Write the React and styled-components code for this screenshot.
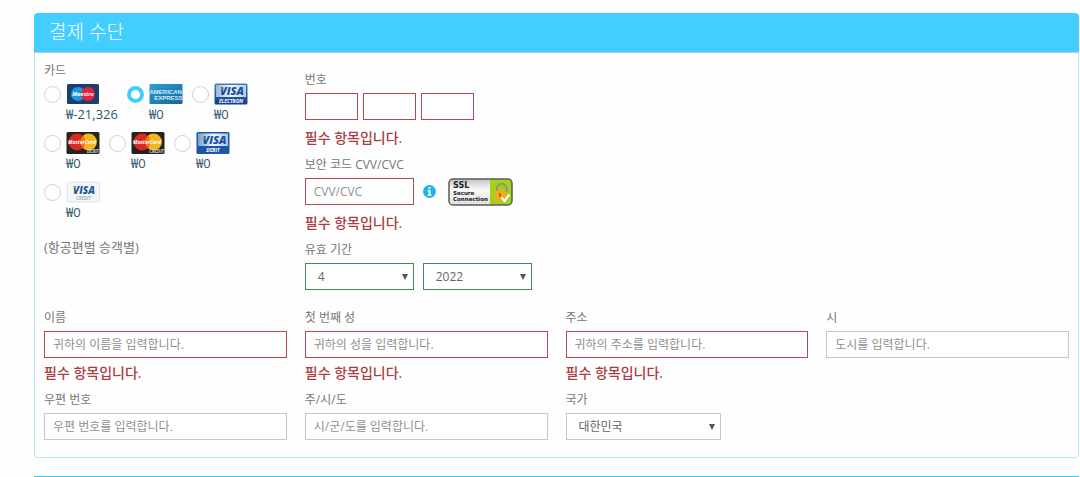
import React, { useState } from 'react';
import styled, { createGlobalStyle } from 'styled-components';

const CARDS = [
  { id: 'maestro', name: 'Maestro', price: '₩-21,326', Logo: MaestroLogo },
  { id: 'amex', name: 'American Express', price: '₩0', Logo: AmexLogo },
  { id: 'electron', name: 'Visa Electron', price: '₩0', Logo: VisaElectronLogo },
  { id: 'mc-debit', name: 'MasterCard Debit', price: '₩0', Logo: MasterDebitLogo },
  { id: 'mc-credit', name: 'MasterCard Credit', price: '₩0', Logo: MasterCreditLogo },
  { id: 'visa-debit', name: 'Visa Debit', price: '₩0', Logo: VisaDebitLogo },
  { id: 'visa-credit', name: 'Visa Credit', price: '₩0', Logo: VisaCreditLogo },
];

const REQUIRED = '필수 항목입니다.';

const BORDERS = {
  error: '#b5494c',
  valid: '#4a8551',
  normal: '#c8c8c8',
};

const GlobalStyle = createGlobalStyle`
  * {
    box-sizing: border-box;
  }

  body {
    margin: 0;
    background: #fefefe;
    color: #777;
    font-family: 'Open Sans', 'Noto Sans CJK KR', sans-serif;
    font-size: 12px;
    line-height: 18px;
  }

  input, select, button {
    font: inherit;
  }
`;

const Page = styled.main`
  display: flex;
  flex-direction: column;
  gap: 18px;
  padding: 13px 1px 0 34px;
`;

const Panel = styled.section`
  border-radius: 4px;
  overflow: hidden;
`;

const PanelHeader = styled.h2`
  margin: 0;
  padding: 6px 15px 7px;
  background: #42ceff;
  border-bottom: 1px solid #b4cdea;
  color: #fff;
  font-size: 19px;
  font-weight: 300;
  line-height: 26px;
`;

const PanelBody = styled.div`
  padding: 9px 9px 17px;
  border: 1px solid #b9e5f3;
  border-top: none;
  border-radius: 0 0 4px 4px;
`;

const NextPanel = styled.div`
  flex: none;
  height: 1px;
  background: #42ceff;
`;

const Columns = styled.div`
  display: grid;
  grid-template-columns: repeat(4, minmax(0, 1fr));
  gap: 9px 18px;
  margin-top: ${(props) => props.$top || 0}px;
`;

const CardGroup = styled.fieldset`
  min-width: 0;
  margin: 0;
  padding: 0;
  border: none;
`;

const Legend = styled.legend`
  display: block;
  margin-bottom: 3px;
  padding: 0;
`;

const CardList = styled.div`
  display: flex;
  flex-wrap: wrap;
  gap: 9px;
`;

const CardOption = styled.label`
  display: flex;
  gap: 5px;
  cursor: pointer;
`;

const Radio = styled.input`
  appearance: none;
  flex: none;
  width: 17px;
  height: 17px;
  margin: 3px 0 0;
  border: 1px solid #cfcfd6;
  border-radius: 50%;
  background: #fff;

  &:checked {
    border: 4px solid #42ceff;
  }
`;

const CardInfo = styled.span`
  display: flex;
  flex-direction: column;
  color: #2b566c;
  font-size: 13px;
`;

const CardArt = styled.svg`
  display: block;
  width: 34px;
  height: 22px;
`;

const Note = styled.p`
  margin: 17px 0 0;
  font-size: 13px;
`;

const Details = styled.div`
  display: flex;
  flex-direction: column;
  gap: 9px;
  padding-top: 9px;
`;

const FieldBox = styled.div`
  display: flex;
  flex-direction: column;
  align-items: stretch;
`;

const Label = styled.label`
  margin-bottom: 4px;
`;

const Inline = styled.div`
  display: flex;
  align-items: center;
  height: 27px;
  gap: ${(props) => props.$gap}px;
`;

const Input = styled.input`
  width: ${(props) => (props.$width ? `${props.$width}px` : '100%')};
  height: 27px;
  padding: 0 8px;
  border: 1px solid ${(props) => BORDERS[props.$state || 'normal']};
  border-radius: 0;
  background: #fff;
  color: #555;

  &::placeholder {
    color: #8f8f8f;
    opacity: 1;
  }
`;

const SelectBox = styled.div`
  position: relative;
  width: ${(props) => props.$width}px;

  &::after {
    content: '';
    position: absolute;
    top: 11px;
    right: 6px;
    border: 3px solid transparent;
    border-top: 6px solid #555;
    border-bottom: none;
    pointer-events: none;
  }
`;

const Select = styled.select`
  appearance: none;
  display: block;
  width: 100%;
  height: 27px;
  padding: 0 20px 0 12px;
  border: 1px solid ${(props) => BORDERS[props.$state || 'normal']};
  border-radius: 0;
  background: #fff;
  color: #666;
`;

const ErrorText = styled.p`
  margin: ${(props) => props.$top || 6}px 0 0;
  color: #ab3c40;
  font-size: 14px;
  font-weight: 500;
`;

const InfoButton = styled.button`
  display: block;
  margin-right: 3px;
  padding: 0;
  border: none;
  background: none;
  cursor: pointer;

  svg {
    display: block;
  }
`;

function Visa({ x, y, size, fill }) {
  return (
    <text
      x={x}
      y={y}
      fill={fill}
      fontFamily="Open Sans, sans-serif"
      fontSize={size}
      fontWeight="800"
      fontStyle="italic"
      textAnchor="middle"
    >
      VISA
    </text>
  );
}

function Caption({ x, y, size, fill, children, anchor = 'middle' }) {
  return (
    <text
      x={x}
      y={y}
      fill={fill}
      fontFamily="Open Sans, sans-serif"
      fontSize={size}
      fontWeight="700"
      fontStyle="italic"
      textAnchor={anchor}
    >
      {children}
    </text>
  );
}

function MaestroLogo() {
  return (
    <CardArt viewBox="0 0 34 22" aria-hidden="true">
      <rect x="1" y="1" width="32" height="20" rx="1.5" fill="#1d3f70" />
      <circle cx="12" cy="11" r="7" fill="#1b9ad8" />
      <circle cx="22" cy="11" r="7" fill="#e2233c" />
      <Caption x="17" y="13" size="5.5" fill="#fff">Maestro</Caption>
    </CardArt>
  );
}

function AmexLogo() {
  return (
    <CardArt viewBox="0 0 34 22" aria-hidden="true">
      <defs>
        <linearGradient id="amex" x1="0" y1="0" x2="1" y2="1">
          <stop offset="0" stopColor="#2fa0cf" />
          <stop offset="1" stopColor="#14639f" />
        </linearGradient>
      </defs>
      <rect x="0.5" y="1" width="33" height="20" rx="1" fill="url(#amex)" />
      <g fontFamily="Liberation Sans, sans-serif" fontSize="6" fontWeight="700" fill="#d8eef8">
        <text x="0.5" y="10.5">AMERICAN</text>
        <text x="33.5" y="16.5" textAnchor="end">EXPRESS</text>
      </g>
    </CardArt>
  );
}

function VisaElectronLogo() {
  return (
    <CardArt viewBox="0 0 34 22" aria-hidden="true">
      <defs>
        <linearGradient id="electron" x1="0" y1="0" x2="0" y2="1">
          <stop offset="0" stopColor="#3f7fc0" />
          <stop offset="1" stopColor="#123f86" />
        </linearGradient>
        <linearGradient id="electron-band" x1="0" y1="0" x2="1" y2="0">
          <stop offset="0" stopColor="#8fb9de" />
          <stop offset="0.5" stopColor="#f3f8fc" />
          <stop offset="1" stopColor="#b3cfe8" />
        </linearGradient>
      </defs>
      <rect x="0.5" y="0.5" width="33" height="21" rx="1.5" fill="url(#electron)" />
      <rect x="2" y="2" width="30" height="12" fill="url(#electron-band)" />
      <Visa x="18" y="12" size="11" fill="#1c4f9c" />
      <path d="M4.5 4h2.6l1.3 3.6z" fill="#e8a72c" />
      <Caption x="17" y="19.8" size="5" fill="#fff">ELECTRON</Caption>
    </CardArt>
  );
}

function MasterCard({ caption }) {
  return (
    <CardArt viewBox="0 0 34 22" aria-hidden="true">
      <rect x="0.5" y="0" width="33" height="22" rx="1.5" fill="#262422" />
      <circle cx="22.5" cy="10" r="8.4" fill="#f6b51c" />
      <circle cx="11" cy="10" r="8.4" fill="#dd2a20" />
      <path d="M16.8 3.9a8.4 8.4 0 0 1 0 12.2a8.4 8.4 0 0 1 0-12.2z" fill="#ee7d1d" />
      <Caption x="16" y="12.2" size="5" fill="#fff">MasterCard</Caption>
      <Caption x="33" y="21.3" size="4.5" fill="#ccc" anchor="end">{caption}</Caption>
    </CardArt>
  );
}

function MasterDebitLogo() {
  return <MasterCard caption="DEBIT" />;
}

function MasterCreditLogo() {
  return <MasterCard caption="CREDIT" />;
}

function VisaDebitLogo() {
  return (
    <CardArt viewBox="0 0 34 22" aria-hidden="true">
      <defs>
        <linearGradient id="debit-band" x1="0" y1="0" x2="1" y2="0">
          <stop offset="0" stopColor="#6fa3d6" />
          <stop offset="0.5" stopColor="#f3f8fc" />
          <stop offset="1" stopColor="#a5c6e6" />
        </linearGradient>
      </defs>
      <rect x="0.5" y="0" width="33" height="22" rx="1.5" fill="#1f55a6" />
      <rect x="2" y="1.5" width="30" height="12.5" fill="url(#debit-band)" />
      <Visa x="18.5" y="12" size="11" fill="#1c4f9c" />
      <path d="M5 4h2.6l1.3 3.6z" fill="#e8a72c" />
      <Caption x="17" y="20" size="5" fill="#fff">DEBIT</Caption>
    </CardArt>
  );
}

function VisaCreditLogo() {
  return (
    <CardArt viewBox="0 0 34 22" aria-hidden="true">
      <rect x="1.5" y="1" width="32" height="20" rx="2" fill="#f4f6f8" stroke="#dfe3e6" />
      <Visa x="18" y="12.5" size="10" fill="#1a5ca0" />
      <path d="M6.8 5.3h2.4l1 3.2z" fill="#b9b53a" />
      <Caption x="17.5" y="18.5" size="4.5" fill="#a3b4c2">CREDIT</Caption>
    </CardArt>
  );
}

function InfoIcon() {
  return (
    <svg width="13" height="13" viewBox="0 0 13 13" aria-hidden="true">
      <circle cx="6.5" cy="6.5" r="6.5" fill="#1fb2f0" />
      <path d="M5.4 2.2h2.2v1.9H5.4zM4.6 5.1h3v4.3h.9v1.3H4.6V9.4h.9V6.4h-.9z" fill="#fff" />
    </svg>
  );
}

function SslBadge() {
  return (
    <svg width="65" height="28" viewBox="0 0 65 28" role="img" aria-label="SSL Secure Connection">
      <defs>
        <linearGradient id="ssl" x1="0" y1="0" x2="0" y2="1">
          <stop offset="0" stopColor="#c4c4c4" />
          <stop offset="0.4" stopColor="#f8f8f8" />
          <stop offset="1" stopColor="#dedede" />
        </linearGradient>
      </defs>
      <rect x="1" y="1" width="63" height="26" rx="4" fill="url(#ssl)" />
      <path d="M42 1h18a4 4 0 0 1 4 4v18a4 4 0 0 1-4 4H42z" fill="#a5cf1d" />
      <rect x="1" y="1" width="63" height="26" rx="4" fill="none" stroke="#5b5b55" strokeWidth="1.5" />
      <g fontFamily="DejaVu Sans, sans-serif" fontWeight="700" fill="#222">
        <text x="5" y="10" fontSize="8">SSL</text>
        <text x="5" y="16.5" fontSize="5.5">Secure</text>
        <text x="5" y="23" fontSize="5.5">Connection</text>
      </g>
      <path d="M49 13v-2.5a4.8 4.8 0 0 1 9.6 0V14" fill="none" stroke="#8d9a72" strokeWidth="2" />
      <rect x="47" y="12.5" width="11" height="10" rx="1" fill="#f6a81c" />
      <path d="M51 15h2v4h-2z" fill="#c8660c" />
      <path d="M53.5 19.5l3 3.5l5-6.5" fill="none" stroke="#fff" strokeWidth="2.2" />
    </svg>
  );
}

function TextField({ id, label, placeholder, required }) {
  return (
    <FieldBox>
      <Label htmlFor={id}>{label}</Label>
      <Input id={id} placeholder={placeholder} $state={required ? 'error' : 'normal'} />
      {required && <ErrorText>{REQUIRED}</ErrorText>}
    </FieldBox>
  );
}

export default function App() {
  const [card, setCard] = useState('amex');

  return (
    <>
      <GlobalStyle />
      <Page>
        <Panel>
          <PanelHeader>결제 수단</PanelHeader>
          <PanelBody>
            <Columns>
              <CardGroup>
                <Legend>카드</Legend>
                <CardList>
                  {CARDS.map(({ id, name, price, Logo }) => (
                    <CardOption key={id}>
                      <Radio
                        type="radio"
                        name="card"
                        value={id}
                        aria-label={name}
                        checked={card === id}
                        onChange={() => setCard(id)}
                      />
                      <CardInfo>
                        <Logo />
                        {price}
                      </CardInfo>
                    </CardOption>
                  ))}
                </CardList>
                <Note>(항공편별 승객별)</Note>
              </CardGroup>
              <Details>
                <FieldBox>
                  <Label htmlFor="number-1">번호</Label>
                  <Inline $gap={5}>
                    <Input id="number-1" $width={53} $state="error" />
                    <Input aria-label="번호 2" $width={53} $state="error" />
                    <Input aria-label="번호 3" $width={53} $state="error" />
                  </Inline>
                  <ErrorText $top={9}>{REQUIRED}</ErrorText>
                </FieldBox>
                <FieldBox>
                  <Label htmlFor="cvv">보안 코드 CVV/CVC</Label>
                  <Inline $gap={9}>
                    <Input id="cvv" placeholder="CVV/CVC" $width={109} $state="error" />
                    <InfoButton type="button" aria-label="CVV/CVC">
                      <InfoIcon />
                    </InfoButton>
                    <SslBadge />
                  </Inline>
                  <ErrorText $top={9}>{REQUIRED}</ErrorText>
                </FieldBox>
                <FieldBox>
                  <Label htmlFor="month">유효 기간</Label>
                  <Inline $gap={9}>
                    <SelectBox $width={109}>
                      <Select id="month" defaultValue="4" $state="valid">
                        <option>4</option>
                      </Select>
                    </SelectBox>
                    <SelectBox $width={109}>
                      <Select aria-label="연도" defaultValue="2022" $state="valid">
                        <option>2022</option>
                      </Select>
                    </SelectBox>
                  </Inline>
                </FieldBox>
              </Details>
            </Columns>
            <Columns $top={19}>
              <TextField id="first-name" label="이름" placeholder="귀하의 이름을 입력합니다." required />
              <TextField id="last-name" label="첫 번째 성" placeholder="귀하의 성을 입력합니다." required />
              <TextField id="address" label="주소" placeholder="귀하의 주소를 입력합니다." required />
              <TextField id="city" label="시" placeholder="도시를 입력합니다." />
              <TextField id="zip" label="우편 번호" placeholder="우편 번호를 입력합니다." />
              <TextField id="state" label="주/시/도" placeholder="시/군/도를 입력합니다." />
              <FieldBox>
                <Label htmlFor="country">국가</Label>
                <SelectBox $width={155}>
                  <Select id="country" defaultValue="대한민국">
                    <option>대한민국</option>
                  </Select>
                </SelectBox>
              </FieldBox>
            </Columns>
          </PanelBody>
        </Panel>
        <NextPanel />
      </Page>
    </>
  );
}
